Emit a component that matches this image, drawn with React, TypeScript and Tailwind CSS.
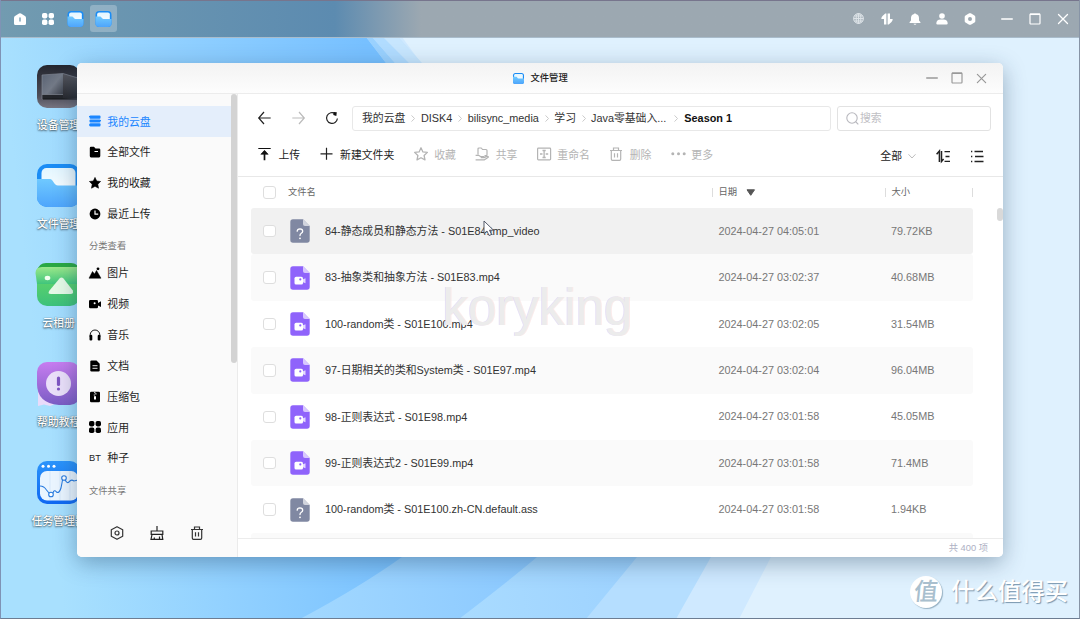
import type { ReactNode } from 'react';

type P = { className?: string };

const Svg = ({ className = '', children, vb = '0 0 16 16' }: { className?: string; children: ReactNode; vb?: string }) => (
  <svg viewBox={vb} className={`block shrink-0 overflow-visible ${className}`} fill="none" stroke="none">
    {children}
  </svg>
);

const FolderLogo = ({ className = '' }: P) => (
  <Svg vb="0 0 43 43" className={className}>
    <defs>
      <linearGradient id="fl" x1="0" y1="0" x2="0" y2="1">
        <stop offset="0" stopColor="#6fc9ff" />
        <stop offset="1" stopColor="#4ea5fc" />
      </linearGradient>
      <linearGradient id="fp" x1="0" y1="0" x2="0" y2="1">
        <stop offset="0" stopColor="#e3f6ff" />
        <stop offset="1" stopColor="#fff" />
      </linearGradient>
    </defs>
    <rect width="43" height="43" rx="10" fill="#1a8cf5" />
    <rect x="4.5" y="4" width="34" height="30" rx="5" fill="url(#fp)" />
    <path d="M0 15H13C16 15 17 21.5 21 21.5H43V33A10 10 0 0 1 33 43H10A10 10 0 0 1 0 33Z" fill="url(#fl)" />
  </Svg>
);

const DeviceLogo = () => (
  <Svg vb="0 0 43 43" className="h-[43px] w-[43px]">
    <defs>
      <linearGradient id="dv" x1="0" y1="0" x2="0" y2="1">
        <stop offset="0" stopColor="#24262f" />
        <stop offset="0.7" stopColor="#4c4c57" />
        <stop offset="1" stopColor="#777581" />
      </linearGradient>
      <linearGradient id="df" x1="0" y1="0" x2="1" y2="1">
        <stop offset="0" stopColor="#596273" />
        <stop offset="0.5" stopColor="#737a87" />
        <stop offset="1" stopColor="#30343d" />
      </linearGradient>
      <linearGradient id="ds" x1="0" y1="0" x2="0" y2="1">
        <stop offset="0" stopColor="#55565e" />
        <stop offset="1" stopColor="#26272c" />
      </linearGradient>
    </defs>
    <rect width="43" height="43" rx="10" fill="url(#dv)" />
    <path d="M5 10 26 8.500V34H5Z" fill="url(#df)" />
    <path d="M26 8.500 41 13V33L26 34Z" fill="url(#ds)" />
    <path d="M5 10 26 8.500 41 13" stroke="#7d838f" strokeWidth="0.700" />
    <path d="M5 29.500H26V34H5Z" fill="#24262b" />
    <path d="M5 29.500H26M5 10V34" stroke="#8b919c" strokeWidth="0.600" />
    <path d="M6 34H40" stroke="#17181b" strokeWidth="1" />
  </Svg>
);

const AlbumLogo = () => (
  <Svg vb="0 0 43 43" className="h-[43px] w-[43px]">
    <defs>
      <linearGradient id="al" x1="0" y1="0" x2="0" y2="1">
        <stop offset="0" stopColor="#9ce88a" />
        <stop offset="1" stopColor="#3fc57c" />
      </linearGradient>
      <linearGradient id="al2" x1="0" y1="0" x2="0" y2="1">
        <stop offset="0" stopColor="#56cf6e" />
        <stop offset="1" stopColor="#3dc17b" />
      </linearGradient>
    </defs>
    <path d="M0 8Q2 0 9 0H34Q41 0 43 8Z" fill="#2aa844" />
    <path d="M-1.500 10Q-1.500 4 5 4H43V21H0Z" fill="url(#al)" />
    <path d="M0 21H43V33A10 10 0 0 1 33 43H10A10 10 0 0 1 0 33Z" fill="url(#al2)" />
    <ellipse cx="10.500" cy="15" rx="2.800" ry="2.200" fill="#f2fff0" />
    <path d="M22.500 15.500Q24.500 13.500 26.500 15.500L35.800 27.500Q37 31 33.500 31H14Q10 31 12.500 27.500Z" fill="#e5f9e6" />
  </Svg>
);

const HelpLogo = () => (
  <Svg vb="0 0 43 43" className="h-[43px] w-[43px]">
    <defs>
      <linearGradient id="hp" x1="0" y1="0" x2="0" y2="1">
        <stop offset="0" stopColor="#c77df0" />
        <stop offset="1" stopColor="#7a5cc4" />
      </linearGradient>
    </defs>
    <path d="M1 24V44L7 42.500 13 44 18 42Z" fill="#e9dbfa" />
    <path d="M10 0H33A10 10 0 0 1 43 10V33A10 10 0 0 1 33 43H22Q0 41 0 22V10A10 10 0 0 1 10 0Z" fill="url(#hp)" />
    <circle cx="21.500" cy="21.500" r="12.500" fill="#eadff9" />
    <path d="M21.500 16V22.500" stroke="#7f56c2" strokeWidth="3.200" strokeLinecap="round" />
    <circle cx="21.500" cy="27" r="1.600" fill="#7f56c2" />
  </Svg>
);

const TaskLogo = () => (
  <Svg vb="0 0 43 43" className="h-[43px] w-[43px]">
    <defs>
      <linearGradient id="tk" x1="0" y1="0" x2="0" y2="1">
        <stop offset="0" stopColor="#2b94fb" />
        <stop offset="1" stopColor="#0f68f2" />
      </linearGradient>
    </defs>
    <rect width="43" height="43" rx="10" fill="url(#tk)" />
    <circle cx="6" cy="5.200" r="1.500" fill="#fff" />
    <circle cx="11.500" cy="5.200" r="1.500" fill="#fff" />
    <circle cx="17" cy="5.200" r="1.500" fill="#fff" />
    <rect x="3" y="10" width="38" height="29.500" rx="7" fill="#eaf5ff" />
    <path d="M13 10V39M23 10V39M33 10V39" stroke="#cfe2f6" strokeWidth="0.700" />
    <path d="M3 25Q7 25 9.500 29L12 32M16 32Q17 28 19.500 31Q22 33 24 27Q25 22 25.500 19M28 18.500Q30 23 32 21Q34 18 37 20L41 19" stroke="#287bdf" strokeWidth="1.100" />
    <circle cx="14" cy="33.500" r="2.300" fill="#fff" stroke="#287bdf" strokeWidth="1.100" />
    <circle cx="27" cy="17" r="2.300" fill="#fff" stroke="#287bdf" strokeWidth="1.100" />
  </Svg>
);

const desktop: [string, ReactNode][] = [
  ['设备管理', <DeviceLogo />],
  ['文件管理', <FolderLogo className="h-[43px] w-[43px]" />],
  ['云相册', <AlbumLogo />],
  ['帮助教程', <HelpLogo />],
  ['任务管理器', <TaskLogo />],
];

const Wallpaper = () => (
  <svg className="absolute inset-0 h-[619px] w-[1080px]" viewBox="0 0 1080 619" preserveAspectRatio="none">
    <defs>
      <linearGradient id="w1" gradientUnits="userSpaceOnUse" x1="0" y1="40" x2="360" y2="0">
        <stop offset="0" stopColor="#a8e0fe" />
        <stop offset="0.450" stopColor="#92d1ff" />
        <stop offset="1" stopColor="#77c0ff" />
      </linearGradient>
      <linearGradient id="w2" gradientUnits="userSpaceOnUse" x1="300" y1="600" x2="540" y2="570">
        <stop offset="0" stopColor="#a2d8ff" />
        <stop offset="1" stopColor="#8ac8ff" />
      </linearGradient>
      <linearGradient id="w3" gradientUnits="userSpaceOnUse" x1="460" y1="600" x2="640" y2="570">
        <stop offset="0" stopColor="#a9dbff" />
        <stop offset="1" stopColor="#9dd2ff" />
      </linearGradient>
    </defs>
    <rect width="1080" height="619" fill="#dff1fe" />
    <path d="M0 0H375L421 63V557H771L739 619H0Z" fill="#cfe9ff" />
    <path d="M0 0H375L398 37 421 63V557H711L676 619H0Z" fill="#b5deff" />
    <path d="M0 0H355L366 37 388 63V557H637L586 619H0Z" fill="url(#w3)" />
    <path d="M0 0H355L366 37 386 63V557H537Q510 580 459 619H0Z" fill="url(#w2)" />
    <path d="M0 0H345L366 37 386 63V557H402Q360 587 300 619H0Z" fill="url(#w1)" />
    <path d="M366 37H372L395 63H386Z" fill="#9ad1fe" />
    <path d="M372 37H383L409 63H395Z" fill="#b1dcff" />
    <path d="M383 37H398L422 63H409Z" fill="#c7e6fe" />
  </svg>
);

const HomeI = () => (
  <Svg className="h-[12px] w-[12px]" vb="0 0 12 12">
    <path d="M5 .6Q6 0 7 .6L11 3Q12 3.700 12 5V10.500Q12 12 10.500 12H1.500Q0 12 0 10.500V5Q0 3.700 1 3Z" fill="#fff" />
    <path d="M6 5V8" stroke="#6b98b1" strokeWidth="1.300" strokeLinecap="round" />
  </Svg>
);
const Grid = ({ className = '' }: P) => (
  <Svg className={className} vb="0 0 12 12">
    <g fill="currentColor">
      <rect width="5.400" height="5.400" rx="1.800" />
      <rect x="6.600" width="5.400" height="5.400" rx="1.800" />
      <rect y="6.600" width="5.400" height="5.400" rx="1.800" />
      <rect x="6.600" y="6.600" width="5.400" height="5.400" rx="1.800" />
    </g>
  </Svg>
);
const Globe = () => (
  <Svg className="h-[11px] w-[11px]" vb="0 0 12 12">
    <g stroke="#dfe5e9" strokeWidth="1">
      <circle cx="6" cy="6" r="5.400" fill="#c5ced4" fillOpacity="0.400" />
      <ellipse cx="6" cy="6" rx="2.500" ry="5.400" />
      <path d="M.6 6H11.400M1.500 3.300H10.500M1.500 8.700H10.500M6 .6V11.400" />
    </g>
  </Svg>
);
const UpDown = () => (
  <Svg className="h-[12px] w-[12px]" vb="0 0 12 12">
    <path d="M5.400 .5V11.500H3V6H.3Q.2 4.500 1.500 3L4.300 .5ZM6.600 11.500V.5H9V6H11.700Q11.800 7.500 10.500 9L7.700 11.500Z" fill="#fff" />
  </Svg>
);
const Bell = () => (
  <Svg className="h-[12px] w-[12px]" vb="0 0 12 12">
    <path d="M6 .2Q6.700 .2 6.800 1Q9.900 1.600 10 5V7.500L11.500 9.300Q11.700 10 11 10H1Q.3 10 .5 9.300L2 7.500V5Q2.100 1.600 5.200 1Q5.300 .2 6 .2ZM4.500 10.700H7.500Q7.200 11.800 6 11.800T4.500 10.700Z" fill="#fff" />
  </Svg>
);
const User = () => (
  <Svg className="h-[12px] w-[12px]" vb="0 0 12 12">
    <circle cx="6" cy="3" r="2.800" fill="#fff" />
    <path d="M.3 10.500Q.5 6.500 4.500 6.500H7.500Q11.500 6.500 11.700 10.500Q11.700 11.600 10.500 11.600H1.500Q.3 11.600 .3 10.500Z" fill="#fff" />
  </Svg>
);
const HexFill = () => (
  <Svg className="h-[12px] w-[12px]" vb="0 0 12 12">
    <path d="M5.200 .3Q6 0 6.800 .3L10.500 2.400Q11.300 3 11.300 3.800V8.200Q11.300 9 10.500 9.600L6.800 11.700Q6 12 5.200 11.700L1.500 9.600Q.7 9 .7 8.200V3.800Q.7 3 1.500 2.400ZM6 4A2 2 0 1 0 6 8A2 2 0 1 0 6 4Z" fill="#fff" fillRule="evenodd" />
  </Svg>
);
const Min = ({ className = '' }: P) => (
  <Svg className={className} vb="0 0 12 12">
    <path d="M0.700 6H11.300" stroke="currentColor" strokeWidth="1.300" strokeLinecap="round" />
  </Svg>
);
const Max = ({ className = '' }: P) => (
  <Svg className={className} vb="0 0 12 12">
    <rect x="1" y="1" width="10" height="10" rx="0.800" stroke="currentColor" strokeWidth="1.200" />
    <path d="M1 1.300H11" stroke="currentColor" strokeWidth="1.500" />
  </Svg>
);
const Close = ({ className = '' }: P) => (
  <Svg className={className} vb="0 0 12 12">
    <path d="M1.500 1.500 10.500 10.500M10.500 1.500 1.500 10.500" stroke="currentColor" strokeWidth="1.300" strokeLinecap="round" />
  </Svg>
);

const S = 'h-[12px] w-[12px]';
const side: [string, ReactNode][] = [
  ['我的云盘', <Svg className={S} vb="0 0 12 12"><g fill="#1b86ff"><rect x="0.500" y="0.500" width="11" height="3.200" rx="1" /><rect x="0.500" y="4.400" width="11" height="3.200" rx="1" /><rect x="0.500" y="8.300" width="11" height="3.200" rx="1" /><path d="M0 1.500H1M11 5.500H12M0 10H1" stroke="#1b86ff" /></g></Svg>],
  ['全部文件', <Svg className={S} vb="0 0 12 12"><path d="M.8 2Q.8 .7 2 .7H5L6.500 2.500H10Q11.300 2.500 11.300 3.800V10Q11.300 11.400 10 11.400H2Q.8 11.400 .8 10Z" fill="#000" /><path d="M5.500 5.500H9" stroke="#fff" strokeWidth="1.100" /></Svg>],
  ['我的收藏', <Svg className={S} vb="0 0 12 12"><path d="M6 .4 7.700 4 11.600 4.500 8.800 7.200 9.500 11.200 6 9.300 2.500 11.200 3.200 7.200 .4 4.500 4.300 4Z" fill="#000" stroke="#000" strokeWidth="0.600" strokeLinejoin="round" /></Svg>],
  ['最近上传', <Svg className={S} vb="0 0 12 12"><circle cx="6" cy="6" r="5.400" fill="#000" /><path d="M6 2.500V6.200H9.200" stroke="#fff" strokeWidth="1.200" /><path d="M8.300 .2 11.900 3.800" stroke="#fafafa" strokeWidth="0.500" /></Svg>],
];
const cats: [string, ReactNode][] = [
  ['图片', <Svg className={S} vb="0 0 12 12"><path d="M0 11.200 3.500 4.500 5.500 7 7.500 3.500 12 11.200Z" fill="#000" stroke="#000" strokeWidth="0.500" strokeLinejoin="round" /><circle cx="9" cy="1.800" r="1.400" fill="#000" /></Svg>],
  ['视频', <Svg className={S} vb="0 0 12 12"><rect x="0" y="2" width="9" height="8.200" rx="1.300" fill="#000" /><path d="M9 5 12 3.300V9L9 7.500Z" fill="#000" /><circle cx="5.600" cy="5.200" r="1" fill="#fff" /></Svg>],
  ['音乐', <Svg className={S} vb="0 0 12 12"><path d="M1.200 8V5.800A4.800 4.800 0 0 1 10.800 5.800V8" stroke="#000" strokeWidth="0.900" /><rect x="0.500" y="5.800" width="2.800" height="5.800" rx="1.100" fill="#000" /><rect x="8.700" y="5.800" width="2.800" height="5.800" rx="1.100" fill="#000" /></Svg>],
  ['文档', <Svg className={S} vb="0 0 12 12"><path d="M1.300 1.800Q1.300 .6 2.500 .6H7.500L10.700 3.700V10.200Q10.700 11.400 9.500 11.400H2.500Q1.300 11.400 1.300 10.200Z" fill="#000" /><path d="M3.500 5.700H8.500M3.500 8.300H8.500" stroke="#fff" strokeWidth="0.900" /></Svg>],
  ['压缩包', <Svg className={S} vb="0 0 12 12"><rect x="1" y="0.800" width="10" height="10.400" rx="1.300" fill="#000" /><path d="M5.800 1V2.200M6.900 2.200V3.400M5.300 3.400V4.600" stroke="#fff" strokeWidth="1.100" /><path d="M5 5.200H7V8.500H5Z" fill="#fff" /></Svg>],
  ['应用', <Grid className="h-[12px] w-[12px] text-black" />],
  ['种子', <span className="block w-[12px] text-[9.300px] text-[#222]">BT</span>],
];

const SideRow = ({ label, icon, active }: { label: string; icon: ReactNode; active?: boolean }) => (
  <div className={`flex h-[30.900px] w-[154px] shrink-0 items-center pl-[12px] ${active ? 'bg-[#e4eefb] text-[#1b86ff]' : 'text-[#1d1d1d]'}`}>
    {icon}
    <span className="ml-[6.300px] pt-[1px] text-[10.850px]">{label}</span>
  </div>
);

const Hex = () => (
  <Svg className="h-[14px] w-[14px]" vb="0 0 14 14">
    <path d="M7 .7 12.700 3.700V10.300L7 13.300 1.300 10.300V3.700Z" stroke="#333" strokeWidth="1.200" strokeLinejoin="round" />
    <circle cx="7" cy="7" r="2" stroke="#333" strokeWidth="1.200" />
  </Svg>
);
const Broom = () => (
  <Svg className="h-[14px] w-[14px]" vb="0 0 14 14">
    <path d="M7 0V5M1.200 8.300V5H12.800V8.300ZM2 8.500 1 13.400H12.800L12 8.500M9.500 13V10.500M4 13.300 4.500 11.500" stroke="#222" strokeWidth="1.200" />
  </Svg>
);
const Trash = ({ className = '' }: P) => (
  <Svg className={className} vb="0 0 14 14">
    <path d="M1 3.500H13M4.500 3.500V1H9.500V3.500M2.300 3.500V12Q2.300 13.300 3.500 13.300H10.500Q11.700 13.300 11.700 12V3.500M5.500 6.300V10.500M8.500 6.300V10.500" stroke="currentColor" strokeWidth="1.200" />
  </Svg>
);

const T = 'h-[14px] w-[14px]';
const tools: [string, ReactNode, boolean][] = [
  ['上传', <Svg className={T} vb="0 0 14 14"><path d="M.3 1.500H12.700" stroke="#111" strokeWidth="1.200" /><path d="M6.500 4V13.300" stroke="#111" strokeWidth="1.700" /><path d="M6.500 3.300 2.800 7.300H10.200Z" fill="#111" stroke="#111" strokeWidth="0.600" strokeLinejoin="round" /></Svg>, true],
  ['新建文件夹', <Svg className={T} vb="0 0 14 14"><path d="M6.500 .8V12.800M.5 6.800H12.500" stroke="#222" strokeWidth="1.200" /></Svg>, true],
  ['收藏', <Svg className={T} vb="0 0 14 14"><path d="M7 .8 8.900 4.900 13.400 5.400 10.100 8.500 11 12.900 7 10.700 3 12.900 3.900 8.500 .6 5.400 5.100 4.900Z" stroke="#b4b4b4" strokeWidth="1.300" strokeLinejoin="round" /></Svg>, false],
  ['共享', <Svg className={T} vb="0 0 14 14"><path d="M3 7.500V2Q3 1 4 1H6.300L7.500 2.500H11Q12 2.500 12 3.500V7.500Q12 8.700 11 8.700H9.500M.6 8.300H3.500L5.500 9.600H8.500Q9.300 9.800 9.200 10.600H5.800M9.200 10.600 12.200 9.300Q13.500 9.200 13.300 10.200L9.500 12.800H.6" stroke="#b4b4b4" strokeWidth="1.200" strokeLinejoin="round" /></Svg>, false],
  ['重命名', <Svg className={T} vb="0 0 14 14"><rect x="0.600" y="1.100" width="13" height="11.800" rx="0.800" stroke="#b4b4b4" strokeWidth="1.200" /><path d="M7.100 3.500V10.500M5.500 3.500H8.700M5.500 10.500H8.700M3 7H5.500M8.700 7H11.200" stroke="#b4b4b4" strokeWidth="1.300" /></Svg>, false],
  ['删除', <Trash className="h-[14px] w-[14px] text-[#b4b4b4]" />, false],
  ['更多', <Svg className={T} vb="0 0 14 14"><g fill="#b4b4b4"><circle cx="1.800" cy="6.800" r="1.500" /><circle cx="7.500" cy="6.800" r="1.500" /><circle cx="13.200" cy="6.800" r="1.500" /></g></Svg>, false],
];

const rows: [string, string, string, boolean][] = [
  ['84-静态成员和静态方法 - S01E84.tmp_video', '2024-04-27 04:05:01', '79.72KB', false],
  ['83-抽象类和抽象方法 - S01E83.mp4', '2024-04-27 03:02:37', '40.68MB', true],
  ['100-random类 - S01E100.mp4', '2024-04-27 03:02:05', '31.54MB', true],
  ['97-日期相关的类和System类 - S01E97.mp4', '2024-04-27 03:02:04', '96.04MB', true],
  ['98-正则表达式 - S01E98.mp4', '2024-04-27 03:01:58', '45.05MB', true],
  ['99-正则表达式2 - S01E99.mp4', '2024-04-27 03:01:58', '71.4MB', true],
  ['100-random类 - S01E100.zh-CN.default.ass', '2024-04-27 03:01:58', '1.94KB', false],
];

const FileIcon = ({ video }: { video: boolean }) => (
  <Svg className="h-[24px] w-[20px]" vb="0 0 20 24">
    <path d="M3 .3H13L19.700 7V21Q19.700 23.700 17 23.700H3Q.3 23.700 .3 21V3Q.3 .3 3 .3Z" fill={video ? '#8f63fb' : '#8088a2'} />
    <path d="M13 .3 19.700 7H15Q13 7 13 5Z" fill={video ? '#d8c8fe' : '#d2d5de'} />
    {video ? (
      <>
        <rect x="4.500" y="10.800" width="8.500" height="7.800" rx="1.600" fill="#fff" />
        <path d="M13 13.200 15.500 12.200V17.300L13 16.300Z" fill="#fff" opacity="0.750" />
        <circle cx="10.300" cy="13.400" r="1.100" fill="#8f63fb" />
      </>
    ) : (
      <>
        <path d="M7.200 12.200Q7.300 9.900 10 9.900Q12.700 10 12.700 12.200Q12.700 13.400 11.300 14.200Q10 15 10 16.500" stroke="#fff" strokeWidth="1.300" strokeLinecap="round" />
        <circle cx="10" cy="19.300" r="0.900" fill="#fff" />
      </>
    )}
  </Svg>
);

const Check = () => <span className="block h-[12.500px] w-[12.500px] shrink-0 rounded-[3px] border border-[#dedede] bg-white" />;

const Crumb = () => (
  <Svg className="h-[7px] w-[4px]" vb="0 0 4 7">
    <path d="M.5 .4 3.500 3.500 .5 6.600" stroke="#c4c4c4" strokeWidth="0.900" />
  </Svg>
);

export default function App() {
  return (
    <div className="relative flex h-[619px] w-[1080px] flex-col overflow-hidden bg-[#6d7d92] font-['Liberation_Sans','Noto_Sans_CJK_SC',sans-serif] leading-none whitespace-nowrap">
      <Wallpaper />

      <header className="relative flex h-[38px] shrink-0 items-center border-t border-b border-t-[#77758d] border-b-[#a9bccb] bg-linear-to-r from-[#729bb0] via-[#5c8bb0] via-31% to-[#9ca8b1] to-39% pb-[1px] pl-[14px]">
        <HomeI />
        <Grid className="ml-[16px] h-[12px] w-[12px] text-white" />
        <FolderLogo className="ml-[13px] h-[16px] w-[17px]" />
        <span className="ml-[6px] flex h-[27px] w-[27px] items-center justify-center rounded-[3px] bg-white/25">
          <FolderLogo className="h-[16px] w-[17px]" />
        </span>
        <div className="ml-auto flex items-center gap-[15.800px] pr-[11px] text-white">
          <span className="flex w-[12px] justify-center"><Globe /></span>
          <UpDown />
          <Bell />
          <User />
          <HexFill />
          <Min className="ml-[9.500px] h-[12px] w-[12px]" />
          <Max className="h-[12px] w-[12px]" />
          <Close className="h-[12px] w-[12px]" />
        </div>
      </header>

      <div className="relative flex w-[117px] flex-1 flex-col items-center gap-[32px] pt-[27px]">
        {desktop.map(([name, icon]) => (
          <div key={name} className="flex h-[67px] flex-col items-center">
            {icon}
            <span className="mt-[12px] text-[10.850px] font-medium text-white [text-shadow:0_1px_2px_rgba(0,0,0,0.6),0_0_1px_rgba(0,0,0,0.5)]">{name}</span>
          </div>
        ))}
      </div>

      <main className="absolute top-[63px] left-[77px] flex h-[494px] w-[926px] flex-col overflow-hidden rounded-[5px] bg-white shadow-[0_6px_22px_rgba(30,60,90,0.38)]">
        <div className="flex h-[31px] shrink-0 items-center border-b border-[#ececec] bg-linear-to-b from-[#f3f3f3] to-[#fdfdfd]">
          <FolderLogo className="ml-[436px] h-[11px] w-[11px]" />
          <span className="ml-[6.500px] pt-[1.500px] text-[9.300px] font-medium text-[#222]">文件管理</span>
          <div className="ml-auto flex items-center gap-[13px] pr-[16px] text-[#999]">
            <Min className="h-[12px] w-[12px]" />
            <Max className="h-[12px] w-[12px]" />
            <Close className="h-[11px] w-[11px]" />
          </div>
        </div>

        <div className="flex min-h-0 flex-1">
          <aside className="flex w-[161px] shrink-0 flex-col border-r border-[#ebebeb] bg-[#fafafa]">
            <div className="flex h-[414px] justify-between">
              <nav className="flex flex-col pt-[12px]">
                {side.map(([label, icon], i) => (
                  <SideRow key={label} label={label} icon={icon} active={i === 0} />
                ))}
                <div className="flex h-[28px] items-center pt-[7px] pl-[12px] text-[9.300px] text-[#777]">分类查看</div>
                {cats.map(([label, icon]) => (
                  <SideRow key={label} label={label} icon={icon} />
                ))}
                <div className="flex h-[28px] items-center pt-[7px] pl-[12px] text-[9.300px] text-[#777]">文件共享</div>
              </nav>
              <span className="h-[269px] w-[6px] rounded-full bg-[#d3d3d3]" />
            </div>
            <div className="flex h-[52px] items-center gap-[26px] pt-[3px] pl-[33px]">
              <Hex />
              <Broom />
              <Trash className="h-[14px] w-[14px] text-[#333]" />
            </div>
          </aside>

          <section className="flex min-w-0 flex-1 flex-col bg-white">
            <div className="flex h-[82.500px] shrink-0 flex-col border-b border-[#e8e8e8]">
              <div className="mt-[12px] flex h-[24.500px] items-center pr-[12px] pl-[19.500px]">
                <Svg className="h-[12px] w-[13px]" vb="0 0 13 12"><path d="M6 0 .7 6 6 12M.7 6H12.700" stroke="#222" strokeWidth="1.200" /></Svg>
                <Svg className="ml-[21px] h-[12px] w-[13px]" vb="0 0 13 12"><path d="M7 0 12.300 6 7 12M12.300 6H.3" stroke="#bbb" strokeWidth="1.200" /></Svg>
                <Svg className="ml-[21.500px] h-[12px] w-[12px]" vb="0 0 12 12"><path d="M9.200 1.600A5.400 5.400 0 1 0 11.400 6.500" stroke="#222" strokeWidth="1.200" /><path d="M7.500 0 10.800 .3 10.300 4 7.300 3Z" fill="#111" /></Svg>
                <div className="ml-[14px] flex h-full w-[478.500px] items-center rounded-[3px] border border-[#e8e8e8] pl-[9px] text-[10.850px] text-[#333]">
                  <span>我的云盘</span>
                  <span className="mr-[5.500px] ml-[6px]"><Crumb /></span>
                  <span>DISK4</span>
                  <span className="mr-[5.500px] ml-[6px]"><Crumb /></span>
                  <span>bilisync_media</span>
                  <span className="mr-[5.500px] ml-[6px]"><Crumb /></span>
                  <span>学习</span>
                  <span className="mr-[5px] ml-[6px]"><Crumb /></span>
                  <span>Java零基础入...</span>
                  <span className="mr-[6px] ml-[8px]"><Crumb /></span>
                  <span className="font-bold text-[#111]">Season 1</span>
                </div>
                <div className="ml-[6px] flex h-full flex-1 items-center rounded-[3px] border border-[#e2e2e2] pl-[8px] text-[10.850px] text-[#c0c0c4]">
                  <Svg className="h-[13px] w-[13px]" vb="0 0 13 13"><circle cx="6" cy="6" r="5.200" stroke="#b8b8be" strokeWidth="1.100" /><path d="M9.600 9.600 12.300 12.300" stroke="#b8b8be" strokeWidth="1.200" /></Svg>
                  <span className="ml-[1.500px]">搜索</span>
                </div>
              </div>
              <div className="flex flex-1 items-start pt-[16.500px] pl-[20px]">
                <div className="flex items-center gap-[19.400px]">
                  {tools.map(([label, icon, on]) => (
                    <div key={label} className={`flex items-center gap-[6.500px] text-[10.850px] ${on ? 'text-[#222]' : 'text-[#b4b4b4]'}`}>
                      {icon}
                      <span className="pt-[2px]">{label}</span>
                    </div>
                  ))}
                </div>
                <div className="mt-[2.500px] mr-[19px] ml-auto flex items-center text-[10.850px] text-[#222]">
                  <span className="pt-[1px]">全部</span>
                  <Svg className="ml-[6px] h-[8px] w-[8px]" vb="0 0 8 8"><path d="M.5 2.300 4 6 7.500 2.300" stroke="#b5b5b5" strokeWidth="0.900" /></Svg>
                  <Svg className="ml-[20px] h-[13px] w-[14px]" vb="0 0 14 13"><path d="M3.400 12V1L.6 4.200M5.500 1V11.500L7.600 9" stroke="#222" strokeWidth="1.500" /><path d="M8.500 1.700H14M9.500 6.500H13.500M8.500 11.300H14" stroke="#222" strokeWidth="1.300" /></Svg>
                  <Svg className="ml-[21px] h-[13px] w-[13px]" vb="0 0 13 13"><path d="M0 1.500H1.300M0 6.500H1.300M0 11.500H1.300M3.500 1.500H12M4 6.500H12.500M3.500 11.500H12.500" stroke="#222" strokeWidth="1.700" /></Svg>
                </div>
              </div>
            </div>

            <div className="flex h-[31.500px] shrink-0 items-center pl-[25px] text-[9.300px] text-[#666]">
              <Check />
              <span className="ml-[12.500px] w-[424px]">文件名</span>
              <span className="flex h-[9px] w-[173px] items-center border-l border-[#ddd] pl-[5.500px]">
                日期
                <Svg className="ml-[8.500px] h-[7px] w-[10px]" vb="0 0 10 7"><path d="M1 .8H8.500L4.750 6.300Z" fill="#555" stroke="#555" strokeLinejoin="round" /></Svg>
              </span>
              <span className="flex h-[9px] w-[88px] items-center border-r border-l border-[#ddd] pl-[5.500px]">大小</span>
            </div>

            <div className="flex min-h-0 flex-1 justify-between overflow-hidden pl-[12.500px]">
              <div className="flex w-[722px] flex-col">
                {rows.map(([name, date, size, video], i) => (
                  <div
                    key={name}
                    className={`flex h-[46.400px] shrink-0 items-center rounded-[3px] pl-[12.500px] text-[10.850px] ${i === 0 ? 'bg-[#f1f1f1]' : i % 2 ? 'bg-[#fafafa]' : 'bg-white'}`}
                  >
                    <Check />
                    <span className="ml-[14.500px]"><FileIcon video={video} /></span>
                    <span className="ml-[15px] w-[393.500px] pt-[0.500px] text-[#333]">{name}</span>
                    <span className="w-[172.500px] text-[#777]">{date}</span>
                    <span className="text-[#777]">{size}</span>
                  </div>
                ))}
                <div className="h-[20px] shrink-0 rounded-[3px] bg-[#fafafa]" />
              </div>
              <span className="h-[13px] w-[6px] rounded-full bg-[#d9d9d9]" />
            </div>

            <div className="flex h-[19px] shrink-0 items-center justify-end border-t border-[#ececec] pt-[2px] pr-[15px] text-[9.300px] text-[#aeb1c4]">共 400 项</div>
          </section>
        </div>
      </main>

      <div className="absolute top-[283px] left-[442.500px] text-[51px] leading-[50px] text-[#ececec] [text-shadow:-1px_0_0_rgba(222,214,240,0.75),1px_0_0_rgba(246,222,222,0.6)]">koryking</div>

      <svg className="absolute top-[220px] left-[483px] h-[17px] w-[12px]" viewBox="0 0 12 17">
        <path d="M1 1V13.500L4 11 6 15.500 8.500 14.500 6.500 10.200H10.500Z" fill="#fff" stroke="#444a5a" strokeWidth="0.900" />
      </svg>

      <div className="absolute top-[576px] left-[910px] flex items-center gap-[9px] text-white">
        <span className="flex h-[32px] w-[32px] items-center justify-center rounded-full bg-white text-[24px] font-medium text-[#a9bfce] shadow-[1px_1px_1px_rgba(120,150,170,0.7)]">
          <span className="-skew-x-6">值</span>
        </span>
        <span className="pt-[2px] text-[23.400px] font-medium [text-shadow:1px_1px_1px_rgba(110,140,165,0.9)]">什么值得买</span>
      </div>

      <div className="pointer-events-none absolute inset-0 border-r border-b border-l border-r-[#8794a6] border-b-[#6d7d92] border-l-[#7f93b5]" />
    </div>
  );
}
